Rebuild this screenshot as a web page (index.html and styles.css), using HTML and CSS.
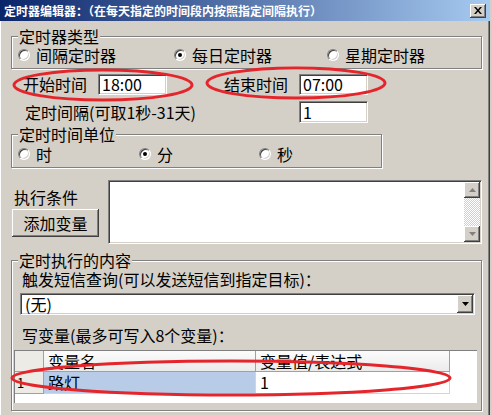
FILE: index.html
```html
<!DOCTYPE html>
<html lang="zh-CN">
<head>
<meta charset="utf-8">
<title>定时器编辑器</title>
<link rel="stylesheet" href="styles.css">
</head>
<body>
<div class="window">
  <div class="titlebar">
    <span class="title">定时器编辑器：（在每天指定的时间段内按照指定间隔执行）</span>
    <span class="close"><svg width="8" height="7" viewBox="0 0 8 7"><path d="M0 0h2l2 2.5L6 0h2L5 3.5 8 7H6L4 4.5 2 7H0l3-3.5z" fill="#000"/></svg></span>
  </div>
  <div class="body">
    <fieldset class="group g-type">
      <legend>定时器类型</legend>
      <div class="radios radios-type">
        <div class="radio"><span class="rb"></span>间隔定时器</div>
        <div class="radio"><span class="rb on"></span>每日定时器</div>
        <div class="radio"><span class="rb"></span>星期定时器</div>
      </div>
    </fieldset>

    <div class="time-row">
      <span class="lbl">开始时间</span>
      <span class="inp">18:00</span>
      <span class="lbl lbl-end">结束时间</span>
      <span class="inp">07:00</span>
    </div>

    <div class="interval-row">
      <span class="lbl-int">定时间隔(可取1秒-31天)</span>
      <span class="inp inp-tall">1</span>
    </div>

    <fieldset class="group g-unit">
      <legend>定时时间单位</legend>
      <div class="radios radios-unit">
        <div class="radio"><span class="rb"></span>时</div>
        <div class="radio"><span class="rb on"></span>分</div>
        <div class="radio"><span class="rb"></span>秒</div>
      </div>
    </fieldset>

    <div class="cond">
      <div class="cond-left">
        <div class="cond-label">执行条件</div>
        <div class="btn">添加变量</div>
      </div>
      <div class="textarea">
        <div class="vscroll">
          <div class="sbtn"><svg width="7" height="4" viewBox="0 0 7 4"><path d="M3.5 0L7 4H0z" fill="#808080"/></svg></div>
          <div class="track"></div>
          <div class="sbtn"><svg width="7" height="4" viewBox="0 0 7 4"><path d="M0 0h7L3.5 4z" fill="#808080"/></svg></div>
        </div>
      </div>
    </div>

    <fieldset class="group g-content">
      <legend>定时执行的内容</legend>
      <div class="sms-label">触发短信查询(可以发送短信到指定目标)：</div>
      <div class="select">
        <span class="select-text">(无)</span>
        <span class="select-btn"><svg width="7" height="4" viewBox="0 0 7 4"><path d="M0 0h7L3.5 4z" fill="#000"/></svg></span>
      </div>
      <div class="var-label">写变量(最多可写入8个变量)：</div>
      <div class="grid">
        <div class="hc hc-corner"></div>
        <div class="hc">变量名</div>
        <div class="hc">变量值/表达式</div>
        <div class="blank"></div>
        <div class="rh">1</div>
        <div class="cell sel">路灯</div>
        <div class="cell">1</div>
        <div class="blank"></div>
      </div>
    </fieldset>
  </div>

  <svg class="marks" width="490" height="415" viewBox="0 0 490 415">
    <ellipse cx="103" cy="85" rx="89" ry="15" />
    <ellipse cx="296" cy="83" rx="89" ry="15" />
    <ellipse cx="231" cy="378" rx="219" ry="17" />
  </svg>
</div>
</body>
</html>
```

FILE: styles.css
```css
* { box-sizing: border-box; }
html, body { margin: 0; padding: 0; }
body {
  width: 492px;
  height: 415px;
  overflow: hidden;
  background: #d4d0c8;
  font-family: "Noto Sans CJK SC", "Noto Sans", sans-serif;
  font-size: 16px;
  color: #000;
}
.window {
  position: relative;
  width: 490px;
  height: 415px;
  background: #d4d0c8;
  box-shadow: inset 1px 0 0 #fff, inset -1px 0 0 #404040, inset -2px 0 0 #808080;
}
.titlebar {
  height: 21px;
  background: linear-gradient(to right, #0a246a, #a6caf0);
  display: flex;
  align-items: center;
  justify-content: space-between;
  padding: 0 4px 0 4px;
}
.title {
  color: #fff;
  font-weight: bold;
  font-size: 12px;
  line-height: 21px;
  white-space: nowrap;
}
.close {
  width: 16px;
  height: 14px;
  background: #d4d0c8;
  box-shadow: inset -1px -1px 0 #404040, inset 1px 1px 0 #fff, inset -2px -2px 0 #808080;
  display: flex;
  align-items: center;
  justify-content: center;
}
.body { padding: 0 8px 0 11px; }

fieldset.group {
  margin: 0;
  min-width: 0;
  border: 1px solid #808080;
  box-shadow: inset 1px 1px 0 #fff, 1px 1px 0 #fff;
}
legend {
  padding: 0 1px;
  font-size: 16px;
  line-height: 16px;
  background: #d4d0c8;
}
.g-type { margin-top: 7px !important; padding: 2px 6px 4px 6px; }
.g-unit { margin-top: 3px !important; width: 371px; padding: 3px 6px 4px 6px; }
.g-content { margin-top: 8px !important; padding: 2px 6px 7px 6px; }

.radios { display: grid; line-height: 18px; }
.radios-type { grid-template-columns: 156px 153px 1fr; }
.radios-unit { grid-template-columns: 121px 120px 1fr; }
.radio { display: flex; align-items: center; gap: 6px; white-space: nowrap; }
.rb {
  position: relative;
  width: 12px;
  height: 12px;
  border-radius: 50%;
  background: #fff;
  border: 1px solid;
  border-color: #808080 #fff #fff #808080;
  box-shadow: inset 1px 1px 0 #404040, inset -1px -1px 0 #d4d0c8;
  flex: none;
}
.rb.on::after {
  content: "";
  position: absolute;
  left: 3px;
  top: 3px;
  width: 4px;
  height: 4px;
  border-radius: 50%;
  background: #000;
}

.time-row {
  display: flex;
  align-items: center;
  margin-top: 5px;
  height: 21px;
  padding-left: 12px;
}
.lbl { width: 75px; line-height: 21px; white-space: nowrap; }
.lbl-end { margin-left: 57px; }
.inp {
  width: 69px;
  height: 21px;
  background: #fff;
  border: 1px solid;
  border-color: #808080 #fff #fff #808080;
  box-shadow: inset 1px 1px 0 #404040, inset -1px -1px 0 #d4d0c8;
  padding-left: 3px;
  line-height: 19px;
  font-size: 16px;
}
.interval-row {
  display: flex;
  align-items: center;
  margin-top: 6px;
  height: 22px;
  padding-left: 14px;
}
.lbl-int { width: 274px; white-space: nowrap; line-height: 22px; }
.inp-tall { height: 22px; line-height: 20px; }

.cond { display: flex; margin-top: 12px; height: 64px; }
.cond-left { width: 97px; padding-top: 8px; }
.cond-label { padding-left: 3px; line-height: 18px; }
.btn {
  margin-top: 3px;
  margin-left: 1px;
  width: 87px;
  height: 28px;
  line-height: 28px;
  text-align: center;
  background: #d4d0c8;
  box-shadow: inset -1px -1px 0 #404040, inset 1px 1px 0 #fff, inset -2px -2px 0 #808080;
}
.textarea {
  flex: 1;
  height: 64px;
  background: #fff;
  border: 1px solid;
  border-color: #808080 #fff #fff #808080;
  box-shadow: inset 1px 1px 0 #404040, inset -1px -1px 0 #d4d0c8;
  padding: 1px;
  display: flex;
  justify-content: flex-end;
}
.vscroll { width: 16px; display: flex; flex-direction: column; }
.sbtn {
  height: 16px;
  background: #d4d0c8;
  box-shadow: inset -1px -1px 0 #404040, inset 1px 1px 0 #fff, inset -2px -2px 0 #808080;
  display: flex;
  align-items: center;
  justify-content: center;
}
.track {
  flex: 1;
  background: repeating-conic-gradient(#d4d0c8 0 25%, #fff 0 50%) 0 0 / 2px 2px;
}

.sms-label { padding-left: 4px; line-height: 18px; white-space: nowrap; }
.select {
  margin-top: 5px;
  margin-left: 2px;
  height: 22px;
  background: #fff;
  border: 1px solid;
  border-color: #808080 #fff #fff #808080;
  box-shadow: inset 1px 1px 0 #404040, inset -1px -1px 0 #d4d0c8;
  padding: 1px;
  display: flex;
}
.select-text { flex: 1; padding-left: 3px; line-height: 18px; }
.select-btn {
  width: 16px;
  background: #d4d0c8;
  box-shadow: inset -1px -1px 0 #404040, inset 1px 1px 0 #fff, inset -2px -2px 0 #808080;
  display: flex;
  align-items: center;
  justify-content: center;
}
.var-label { margin-top: 11px; padding-left: 4px; line-height: 18px; white-space: nowrap; }

.grid {
  margin-top: 6px;
  margin-left: -4px;
  margin-right: -2px;
  height: 53px;
  background: #fff;
  border-left: 1px solid #808080;
  border-top: 1px solid #808080;
  display: grid;
  grid-template-columns: 29px 212px 194px 1fr;
  grid-template-rows: 21px 22px;
  align-content: start;
}
.hc {
  background: linear-gradient(#fcfcfc, #ebebeb);
  border-right: 1px solid #a0a0a0;
  border-bottom: 1px solid #a0a0a0;
  padding-left: 4px;
  line-height: 20px;
  white-space: nowrap;
}
.hc-corner { background: #ecebe6; }
.rh {
  background: #ecebe6;
  border-right: 1px solid #a0a0a0;
  border-bottom: 1px solid #a0a0a0;
  font-size: 13px;
  line-height: 21px;
  padding-left: 2px;
}
.cell {
  border-right: 1px solid #d4d4d4;
  border-bottom: 1px solid #d4d4d4;
  padding-left: 4px;
  line-height: 21px;
}
.cell.sel { background: #b8cce8; }
.blank { background: #fff; }

.marks {
  position: absolute;
  left: 0;
  top: 0;
  pointer-events: none;
}
.marks ellipse {
  fill: none;
  stroke: #e4262c;
  stroke-width: 3;
}
```
